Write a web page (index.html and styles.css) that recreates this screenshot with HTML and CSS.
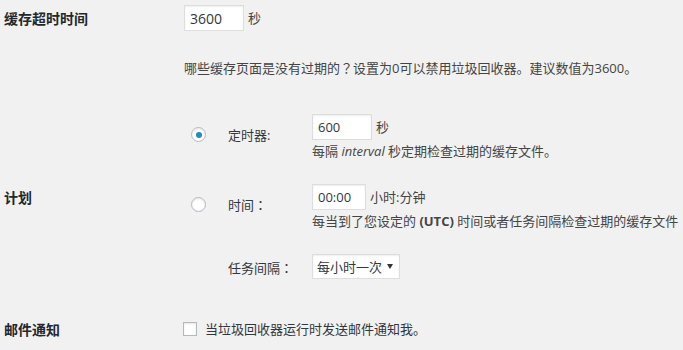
FILE: index.html
```html
<!DOCTYPE html>
<html lang="zh-CN">
<head>
<meta charset="utf-8">
<title>垃圾回收设置</title>
<link rel="stylesheet" href="styles.css">
</head>
<body>
<div class="form">
  <div class="row row-timeout">
    <div class="th">缓存超时时间</div>
    <div class="td">
      <div class="line"><input class="text big w60" type="text" value="3600"> 秒</div>
      <p class="desc">哪些缓存页面是没有过期的<span class="fw" lang="zh-TW">？</span>设置为0可以禁用垃圾回收器。建议数值为3600。</p>
    </div>
  </div>

  <div class="row row-schedule">
    <div class="th">计划</div>
    <div class="td">
      <div class="sched">
        <div class="s-radio"><input class="radio" type="radio" name="sched" checked></div>
        <div class="s-label">定时器:</div>
        <div class="s-field">
          <div class="line"><input class="text w60" type="text" value="600"> 秒</div>
          <div class="s-desc">每隔 <em>interval</em> 秒定期检查过期的缓存文件。</div>
        </div>

        <div class="s-radio"><input class="radio" type="radio" name="sched"></div>
        <div class="s-label">时间<span class="fw" lang="zh-TW">：</span></div>
        <div class="s-field">
          <div class="line"><input class="text w54" type="text" value="00:00"> 小时:分钟</div>
          <div class="s-desc">每当到了您设定的 <strong>(UTC)</strong> 时间或者任务间隔检查过期的缓存文件</div>
        </div>

        <div class="s-radio"></div>
        <div class="s-label mid">任务间隔<span class="fw" lang="zh-TW">：</span></div>
        <div class="s-field">
          <span class="select"><select><option>每小时一次</option></select></span>
        </div>
      </div>
    </div>
  </div>

  <div class="row row-mail">
    <div class="th">邮件通知</div>
    <div class="td">
      <label class="check"><input class="checkbox" type="checkbox"><span>当垃圾回收器运行时发送邮件通知我。</span></label>
    </div>
  </div>
</div>
</body>
</html>
```

FILE: styles.css
```css
html, body {
  margin: 0;
  padding: 0;
  background: #f1f1f1;
  overflow: hidden;
}

body {
  width: 683px;
  height: 350px;
  font-family: "Open Sans", "Noto Sans CJK SC", sans-serif;
  font-size: 13px;
  color: #444;
}

.fw {
  font-family: "Noto Sans CJK TC", "Noto Sans CJK SC", sans-serif;
}

.form {
  display: flex;
  flex-direction: column;
}

.row {
  display: grid;
  grid-template-columns: 184px 1fr;
}

.th {
  padding-left: 4px;
  font-size: 14px;
  font-weight: 700;
  color: #23282d;
  font-family: "Noto Sans CJK SC", "Open Sans", sans-serif;
}

/* row 1 */
.row-timeout .th {
  margin-top: 5px;
  line-height: 26px;
}

.row-timeout .td {
  padding-top: 5px;
}

.line {
  display: flex;
  align-items: center;
  gap: 4px;
  height: 26px;
  line-height: 20px;
  white-space: nowrap;
}

.text {
  box-sizing: border-box;
  height: 26px;
  margin: 0;
  padding: 0 5px;
  border: 1px solid #ddd;
  background: #fff;
  box-shadow: inset 0 1px 2px rgba(0, 0, 0, 0.07);
  font-family: "Open Sans", sans-serif;
  font-size: 13px;
  color: #32373c;
  outline: none;
}

.text.big {
  font-size: 14px;
}

.w60 { width: 60px; }
.w54 { width: 54px; }

.desc {
  margin: 27px 0 0;
  line-height: 20px;
  white-space: nowrap;
}

/* row 2 */
.row-schedule {
  margin-top: 36px;
  align-items: center;
}

.sched {
  display: grid;
  grid-template-columns: 44px 84px 1fr;
  row-gap: 23px;
  align-items: start;
}

.s-radio {
  padding-top: 13px;
  padding-left: 7px;
}

.radio {
  appearance: none;
  -webkit-appearance: none;
  display: block;
  box-sizing: border-box;
  width: 15px;
  height: 15px;
  margin: 0;
  border: 1px solid #b4b9be;
  border-radius: 50%;
  background: #fff;
  box-shadow: inset 0 1px 2px rgba(0, 0, 0, 0.1);
  position: relative;
}

.radio:checked::after {
  content: "";
  position: absolute;
  left: 3.5px;
  top: 3.5px;
  width: 6px;
  height: 6px;
  border-radius: 50%;
  background: #1e8cbe;
}

.s-label {
  margin-top: 11px;
  line-height: 20px;
  color: #32373c;
}

.s-label.mid {
  margin-top: 4px;
}

.s-field {
  min-width: 0;
}

.s-desc {
  margin-top: 1px;
  line-height: 20px;
  white-space: nowrap;
}

.s-desc em {
  font-style: italic;
}

.select {
  position: relative;
  display: inline-block;
  vertical-align: top;
}

.select select {
  appearance: none;
  -webkit-appearance: none;
  box-sizing: border-box;
  display: block;
  width: 88px;
  height: 25px;
  margin: 0;
  padding: 0 0 0 4px;
  border: 1px solid #ddd;
  border-radius: 0;
  background: #fff;
  box-shadow: inset 0 1px 2px rgba(0, 0, 0, 0.07);
  font-family: "Noto Sans CJK SC", "Open Sans", sans-serif;
  font-size: 13px;
  color: #32373c;
  outline: none;
}

.select::after {
  content: "";
  position: absolute;
  right: 7px;
  top: 10px;
  width: 0;
  height: 0;
  border-left: 3px solid transparent;
  border-right: 3px solid transparent;
  border-top: 5px solid #333;
  pointer-events: none;
}

/* row 3 */
.row-mail {
  margin-top: 40px;
  align-items: center;
  height: 20px;
}

.check {
  display: flex;
  align-items: center;
  gap: 8px;
  line-height: 20px;
  color: #32373c;
}

.checkbox {
  appearance: none;
  -webkit-appearance: none;
  display: block;
  box-sizing: border-box;
  width: 14px;
  height: 14px;
  margin: 0 0 0 -1px;
  border: 1px solid #b4b9be;
  background: #fff;
  box-shadow: inset 0 1px 2px rgba(0, 0, 0, 0.1);
}
```
